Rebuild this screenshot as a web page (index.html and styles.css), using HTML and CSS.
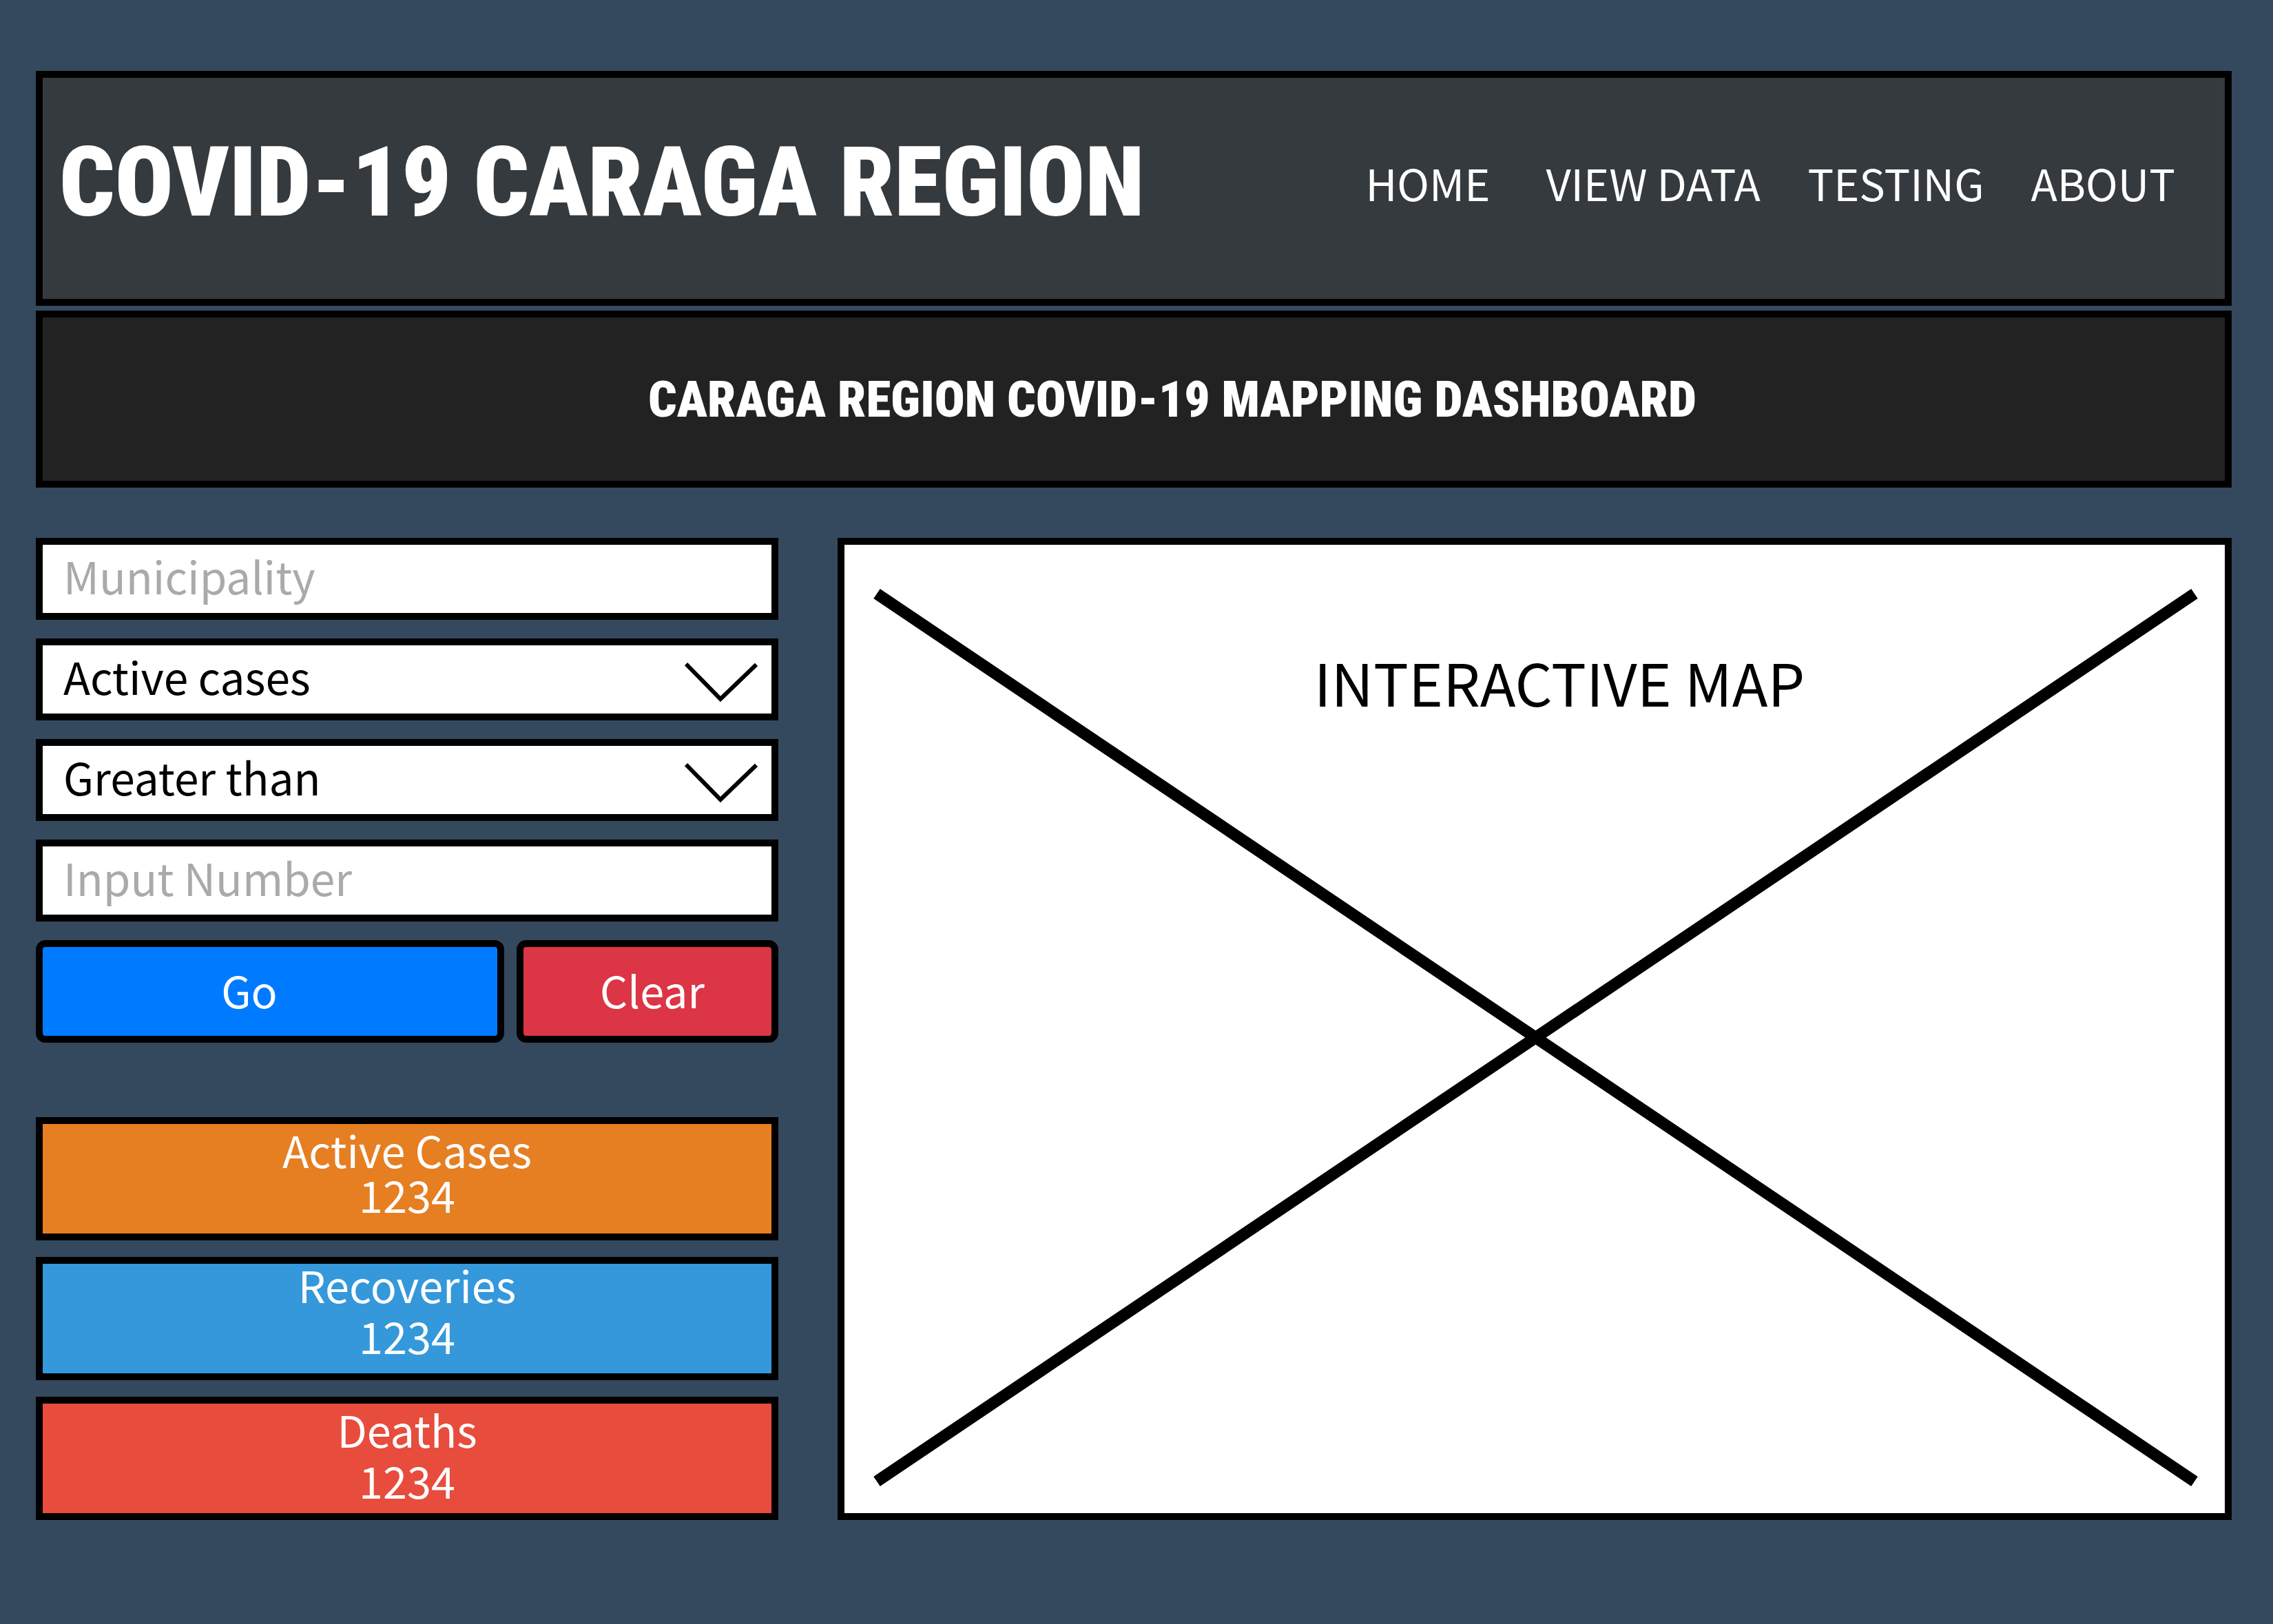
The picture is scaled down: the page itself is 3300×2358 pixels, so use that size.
FILE: index.html
```html
<!DOCTYPE html>
<html lang="en">
<head>
  <meta charset="utf-8">
  <meta name="viewport" content="width=device-width, initial-scale=1">
  <title>COVID-19 Caraga Region</title>
  <link rel="stylesheet" href="styles.css">
</head>
<body>
  <header class="site-header panel">
    <h1 class="site-title">COVID-19 CARAGA REGION</h1>
    <nav class="site-nav">
      <a href="#home">HOME</a>
      <a href="#data">VIEW DATA</a>
      <a href="#testing">TESTING</a>
      <a href="#about">ABOUT</a>
    </nav>
  </header>

  <div class="banner panel">
    <h2 class="banner-title">CARAGA REGION COVID-19 MAPPING DASHBOARD</h2>
  </div>

  <main class="dashboard">
    <div class="sidebar">
      <form class="filters">
        <input class="field panel" type="text" placeholder="Municipality" aria-label="Municipality">
        <div class="select">
          <select class="field panel" aria-label="Case type">
            <option>Active cases</option>
          </select>
          <svg class="chevron" viewBox="0 0 106 60" aria-hidden="true"><path d="M2 3L52 54L104 4"/></svg>
        </div>
        <div class="select">
          <select class="field panel" aria-label="Comparison">
            <option>Greater than</option>
          </select>
          <svg class="chevron" viewBox="0 0 106 60" aria-hidden="true"><path d="M2 3L52 54L104 4"/></svg>
        </div>
        <input class="field panel" type="text" inputmode="numeric" placeholder="Input Number" aria-label="Input Number">
        <div class="actions">
          <button class="button button-go" type="button">Go</button>
          <button class="button button-clear" type="reset">Clear</button>
        </div>
      </form>

      <div class="stats">
        <section class="stat stat-active panel">
          <h3 class="stat-label">Active Cases</h3>
          <p class="stat-value">1234</p>
        </section>
        <section class="stat stat-recoveries panel">
          <h3 class="stat-label">Recoveries</h3>
          <p class="stat-value">1234</p>
        </section>
        <section class="stat stat-deaths panel">
          <h3 class="stat-label">Deaths</h3>
          <p class="stat-value">1234</p>
        </section>
      </div>
    </div>

    <section class="map panel">
      <svg class="map-cross" viewBox="0 0 100 100" preserveAspectRatio="none" aria-hidden="true">
        <path d="M0 0L100 100M0 100L100 0"/>
      </svg>
      <h2 class="map-title">INTERACTIVE MAP</h2>
    </section>
  </main>
</body>
</html>
```

FILE: styles.css
```css
* {
  box-sizing: border-box;
}

body {
  margin: 0;
  padding: 103px 60px 151px 52px;
  background: #34495e;
  color: #fff;
  font-family: "Noto Sans CJK SC", "Noto Sans", sans-serif;
  font-size: 63px;
  line-height: 74px;
}

h1, h2, h3, p {
  margin: 0;
  font-size: inherit;
  font-weight: 400;
}

.panel {
  border: 10px solid #000;
}

.site-header {
  display: flex;
  align-items: center;
  justify-content: space-between;
  min-height: 341px;
  padding: 0 72px 18px 24px;
  background: #353a3e;
}

.site-title,
.banner-title {
  font-family: "Roboto Condensed", "Roboto", sans-serif;
  font-weight: 900;
  white-space: nowrap;
}

.site-title {
  font-size: 141px;
  line-height: 144px;
}

.site-nav {
  display: grid;
  grid-template-columns: 262px 380px 324px auto;
}

.site-nav a {
  color: inherit;
  text-decoration: none;
  white-space: nowrap;
}

.banner {
  display: flex;
  align-items: center;
  justify-content: center;
  min-height: 257px;
  margin-top: 7px;
  padding-left: 112px;
  background: #222;
}

.banner-title {
  font-size: 73px;
}

.dashboard {
  display: grid;
  grid-template-columns: 1078fr 2024fr;
  gap: 86px;
  margin-top: 73px;
}

.sidebar {
  display: flex;
  flex-direction: column;
  gap: 108px;
}

.filters {
  display: flex;
  flex-direction: column;
  gap: 27px;
}

.field {
  width: 100%;
  height: 119px;
  padding: 0 30px 12px;
  border-radius: 0;
  background: #fff;
  color: #000;
  font: inherit;
  font-size: 64px;
  appearance: none;
}

.field::placeholder {
  color: #aaa;
  opacity: 1;
}

.select {
  display: grid;
  align-items: center;
}

.select > * {
  grid-area: 1 / 1;
}

.chevron {
  justify-self: end;
  width: 106px;
  height: 60px;
  margin: 8px 30px 0 0;
  pointer-events: none;
}

.chevron path {
  fill: none;
  stroke: #000;
  stroke-width: 6;
}

.actions {
  display: grid;
  grid-template-columns: 680fr 380fr;
  gap: 18px;
}

.button {
  height: 149px;
  padding: 0 0 6px;
  border: 10px solid #000;
  border-radius: 14px;
  color: #fff;
  font: inherit;
}

.button-go {
  padding-right: 60px;
  background: #007bff;
}

.button-clear {
  padding-left: 14px;
  background: #dc3545;
}

.stats {
  display: flex;
  flex-direction: column;
  gap: 24px;
}

.stat {
  min-height: 179px;
  text-align: center;
}

.stat-active {
  background: #e67e22;
}

.stat-active .stat-value {
  line-height: 56px;
}

.stat-recoveries {
  background: #3498db;
}

.stat-recoveries .stat-label {
  line-height: 60px;
}

.stat-recoveries .stat-value {
  line-height: 88px;
}

.stat-deaths {
  background: #e74c3c;
}

.map {
  position: relative;
  padding: 154px 0 0 72px;
  background: #fff;
  color: #000;
  text-align: center;
}

.map-cross {
  position: absolute;
  top: 71px;
  left: 47px;
  width: calc(100% - 91px);
  height: calc(100% - 117px);
  overflow: visible;
}

.map-cross path {
  fill: none;
  stroke: #000;
  stroke-width: 17px;
  vector-effect: non-scaling-stroke;
}

.map-title {
  position: relative;
  font-size: 85px;
  line-height: 88px;
}
```
